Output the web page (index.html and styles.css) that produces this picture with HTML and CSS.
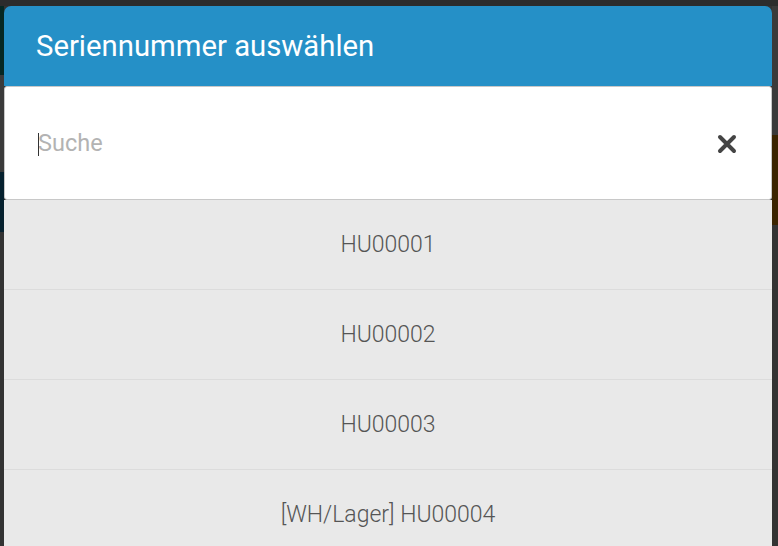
FILE: index.html
```html
<!doctype html>
<html lang="de">
<head>
<meta charset="utf-8">
<title>Seriennummer auswählen</title>
<link rel="stylesheet" href="styles.css">
</head>
<body>

<div class="dialog">

	<div class="dialog-head">
		<h1 class="dialog-title">Seriennummer auswählen</h1>
	</div>

	<div class="search">
		<span class="caret"></span>
		<input class="search-input" type="text" placeholder="Suche">
		<button class="search-clear" type="button" aria-label="Leeren">
			<svg width="20" height="20" viewBox="0 0 20 20">
				<path d="M3 3 L17 17 M17 3 L3 17" stroke="#444" stroke-width="4" stroke-linecap="round" fill="none"/>
			</svg>
		</button>
	</div>

	<ul class="serials">
		<li class="serial">HU00001</li>
		<li class="serial">HU00002</li>
		<li class="serial">HU00003</li>
		<li class="serial">[WH/Lager] HU00004</li>
	</ul>

</div>

</body>
</html>
```

FILE: styles.css
```css
html, body, ul, h1 { margin:0; padding:0; }
ul { list-style:none; }

body {
	height:546px;
	overflow:hidden;
	font-family:Roboto, "Noto Sans", sans-serif;
	background-color:#333;
	/* Reste der Seite hinter dem Overlay */
	background-image:
		linear-gradient(#2c2c2c, #2c2c2c),
		linear-gradient(#062823, #062823),
		linear-gradient(#3a3a3a, #3a3a3a),
		linear-gradient(#06212f, #06212f),
		linear-gradient(#3a3a3a, #3a3a3a),
		linear-gradient(#3b2400, #3b2400);
	background-size:
		100% 6px,
		4px 69px,
		4px 97px,
		4px 60px,
		6px 129px,
		6px 90px;
	background-position:
		0 0,
		0 6px,
		0 75px,
		0 172px,
		100% 6px,
		100% 135px;
	background-repeat:no-repeat;
}

.dialog {
	margin:6px 0 0 4px;
	width:768px;
}

.dialog-head {
	height:80px;
	padding:0 0 0 32px;
	background-color:#2590c7;
	border-radius:7px 7px 0 0;
	display:flex;
	align-items:center;
}

.dialog-title {
	font-size:29.3px;
	font-weight:400;
	color:#fff;
}

.search {
	position:relative;
	height:114px;
	background-color:#fff;
	border:1px solid #c8c8c8;
	border-radius:3px;
	display:flex;
	align-items:center;
	padding:0 34px 0 33px;
	box-sizing:border-box;
}

.search-input {
	flex:1;
	border:0;
	outline:0;
	padding:0;
	font-family:inherit;
	font-size:23.5px;
	color:#444;
	background:transparent;
}
.search-input::placeholder { color:#b3b3b3; }

.caret {
	position:absolute;
	left:33px; top:46px;
	width:1px; height:23px;
	background-color:#333;
}

.search-clear {
	border:0;
	padding:0;
	background:none;
	width:20px; height:20px;
	margin-top:1px;
}
.search-clear svg { display:block; }

.serials { background-color:#e9e9e9; }

.serial {
	height:89px;
	border-bottom:1px solid #dcdcdc;
	display:flex;
	align-items:center;
	justify-content:center;
	font-size:23px;
	font-weight:300;
	color:#555;
}
```
